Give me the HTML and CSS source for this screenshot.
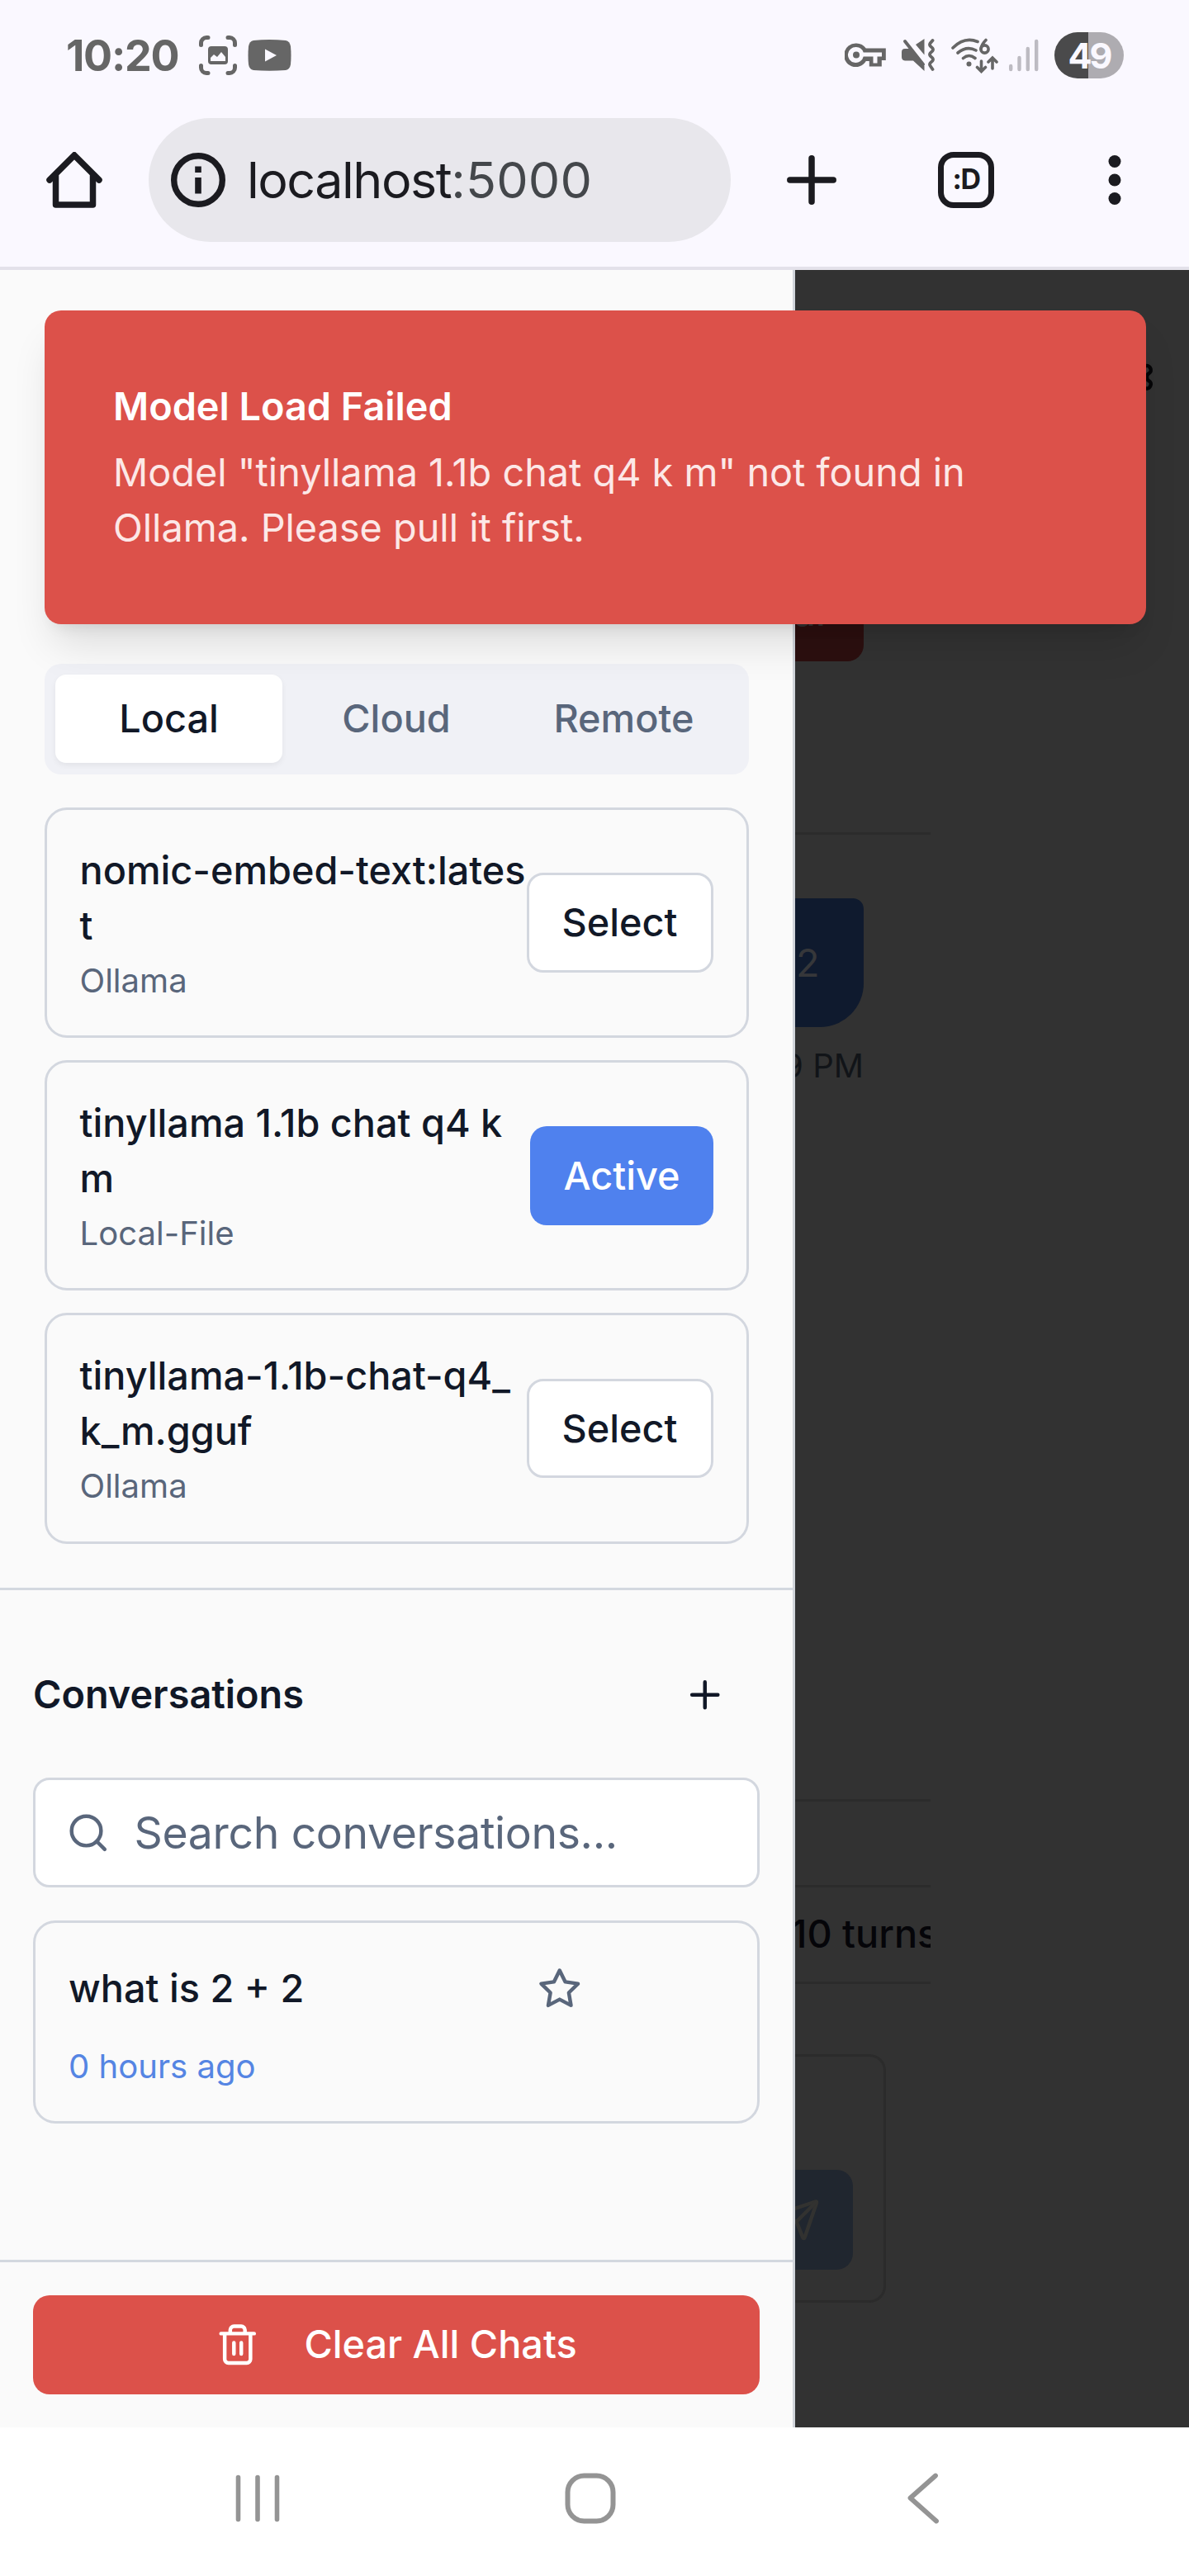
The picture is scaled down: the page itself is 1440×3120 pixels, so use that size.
FILE: index.html
```html
<!DOCTYPE html>
<html lang="en">
<head>
<meta charset="utf-8">
<title>localhost:5000</title>
<link rel="stylesheet" href="styles.css">
</head>
<body>
<div class="phone">
  <header class="browser">
    <div class="status">
      <div class="status-left">
        <span class="clock">10:20</span>
        <svg class="ic-shot" width="46" height="48" viewBox="0 0 46 48" fill="none" stroke="#666" stroke-width="5" stroke-linecap="round">
          <path d="M2.500 11.500V9a6.500 6.500 0 0 1 6.500-6.500h2M35 2.500h2a6.500 6.500 0 0 1 6.500 6.500v2.500M43.500 36.500V39a6.500 6.500 0 0 1-6.500 6.500h-2M11 45.500H9A6.500 6.500 0 0 1 2.500 39v-2.500"/>
          <rect x="11" y="13" width="24" height="22" rx="4" fill="#666" stroke="none"/>
          <path d="M14 31v-4l4-4 4 3 5-6 5 6v5z" fill="#faf8ff" stroke="none"/>
        </svg>
        <svg class="ic-video" width="53" height="38" viewBox="0 0 53 38"><path d="M7 1Q26 -1 46 1Q51 2 52 8Q53 19 52 30Q51 36 46 37Q26 38.500 7 37Q2 36 1 30Q0 19 1 8Q2 2 7 1z" fill="#666"/><path d="M21 11.500v15L35 19z" fill="#faf8ff"/></svg>
      </div>
      <div class="status-right">
        <svg width="50" height="30" viewBox="0 0 50 30"><path d="M14 0.500a14.300 14.300 0 1 0 11.800 21.500h4v6.500h15v-7.500h5V6.500H25.800A14.300 14.300 0 0 0 14 .5zM14 5a9.500 9.500 0 0 1 8.700 6.500H45v5h-5.500v8h-5v-8H22.700A9.500 9.500 0 1 1 14 5z" fill="#666" fill-rule="evenodd"/><circle cx="14" cy="14.500" r="4" fill="#666"/></svg>
        <svg class="ic-mute" width="40" height="40" viewBox="0 0 40 40" fill="none"><path d="M4 12h6L27.500 33v6L14 26.500H4Q0 26 0 22v-6Q0 12 4 12zM17 7L27.500 0v19.500z" fill="#666"/><path d="M6 0.500L30 27.500" stroke="#faf8ff" stroke-width="3"/><path d="M4 3L26 31" stroke="#666" stroke-width="4" stroke-linecap="round"/><path d="M37.500 2l-3 3.500q-1 1.500 0 3l3 3q1 1.500 0 3l-3 3q-1 1.500 0 3l3 3q1 1.500 0 3l-3 3q-1 1.500 0 3l3 4.500" stroke="#666" stroke-width="3.800" stroke-linecap="round"/></svg>
        <svg class="ic-wifi" width="57" height="43" viewBox="0 0 57 43" fill="none" stroke="#666" stroke-width="3.600" stroke-linecap="round"><path d="M2 12Q16-2 32 4.500M8 18q11-9 22-3M14.500 24.500q7-6 14.500 0"/><circle cx="21.500" cy="31.500" r="3" fill="#666" stroke="none"/><path d="M36.500 40V28m-5 7.500 5 5 5-5M50 37V25m-5 4 5-5 5 5M42 2.500q-5.500 5.500-6 11"/><circle cx="40.500" cy="13.500" r="4.600"/></svg>
        <svg class="ic-signal" width="36" height="40" viewBox="0 0 36 40" stroke="#bdbbc2" stroke-width="4.400" stroke-linecap="round"><path d="M2.200 33v4M12.500 23v14M22.800 12v25M33.200 3v34"/></svg>
        <span class="battery">49</span>
      </div>
    </div>
    <div class="toolbar">
      <svg class="ic-home" width="68" height="68" viewBox="0 0 68 68" fill="none" stroke="#1b1b20" stroke-width="7.500" stroke-linejoin="round" stroke-linecap="round"><path d="M4 34L34 4l30 30" stroke-linejoin="miter"/><path d="M11.500 29v35h45V29"/></svg>
      <div class="url">
        <svg width="66" height="66" viewBox="0 0 66 66"><circle cx="33" cy="33" r="29.300" fill="none" stroke="#1b1b20" stroke-width="7.400"/><path d="M29.200 16.500h7.600V24h-7.600zM29.200 30h7.600v19.500h-7.600z" fill="#1b1b20"/></svg>
        <span class="host">localhost</span><span class="port">:5000</span>
      </div>
      <svg class="ic-newtab" width="60" height="60" viewBox="0 0 60 60" stroke="#1b1b20" stroke-width="7.500" stroke-linecap="round"><path d="M30 3.800v52.400M3.800 30h52.400"/></svg>
      <span class="tabs-count">:D</span>
      <svg class="ic-more" width="16" height="60" viewBox="0 0 16 60" fill="#1b1b20"><circle cx="8" cy="7.500" r="7.500"/><circle cx="8" cy="30" r="7.500"/><circle cx="8" cy="52.500" r="7.500"/></svg>
    </div>
  </header>

  <div class="page">
    <aside class="sidebar">
      <section class="models">
        <div class="tabs">
          <span class="tab tab-on">Local</span>
          <span class="tab">Cloud</span>
          <span class="tab">Remote</span>
        </div>
        <div class="model-list">
          <div class="model">
            <div class="model-info"><div class="model-name">nomic-embed-text:latest</div><div class="model-src">Ollama</div></div>
            <span class="btn">Select</span>
          </div>
          <div class="model">
            <div class="model-info"><div class="model-name">tinyllama 1.1b chat q4 k m</div><div class="model-src">Local-File</div></div>
            <span class="btn btn-active">Active</span>
          </div>
          <div class="model">
            <div class="model-info"><div class="model-name">tinyllama-1.1b-chat-q4_k_m.gguf</div><div class="model-src">Ollama</div></div>
            <span class="btn">Select</span>
          </div>
        </div>
      </section>
      <section class="convs">
        <div class="convs-head">
          <h2>Conversations</h2>
          <span class="add"><svg class="lucide" viewBox="0 0 24 24"><path d="M5 12h14M12 5v14"/></svg></span>
        </div>
        <div class="search">
          <svg class="lucide" viewBox="0 0 24 24"><circle cx="11" cy="11" r="8"/><path d="m21 21-4.300-4.300"/></svg>
          <span>Search conversations...</span>
        </div>
        <div class="conv">
          <div class="conv-row">
            <span class="conv-title">what is 2 + 2</span>
            <svg class="lucide" viewBox="0 0 24 24"><path d="M12 2l3.090 6.260L22 9.270l-5 4.870 1.180 6.880L12 17.770l-6.180 3.250L7 14.140 2 9.270l6.910-1.010z"/></svg>
          </div>
          <div class="conv-time">0 hours ago</div>
        </div>
      </section>
      <footer class="side-foot">
        <span class="clear">
          <svg class="lucide" viewBox="0 0 24 24"><path d="M3 6h18M19 6v14c0 1-1 2-2 2H7c-1 0-2-1-2-2V6M8 6V4c0-1 1-2 2-2h4c1 0 2 1 2 2v2M10 11v6M14 11v6"/></svg>
          Clear All Chats
        </span>
      </footer>
    </aside>

    <main class="dimmed">
      <div class="app-head">
        <svg class="lucide gear" viewBox="0 0 24 24"><path d="M12.220 2h-.44a2 2 0 0 0-2 2v.18a2 2 0 0 1-1 1.730l-.43.25a2 2 0 0 1-2 0l-.15-.08a2 2 0 0 0-2.730.73l-.22.38a2 2 0 0 0 .73 2.730l.15.1a2 2 0 0 1 1 1.720v.51a2 2 0 0 1-1 1.740l-.15.09a2 2 0 0 0-.73 2.730l.22.38a2 2 0 0 0 2.730.73l.15-.08a2 2 0 0 1 2 0l.43.25a2 2 0 0 1 1 1.730V20a2 2 0 0 0 2 2h.44a2 2 0 0 0 2-2v-.18a2 2 0 0 1 1-1.730l.43-.25a2 2 0 0 1 2 0l.15.08a2 2 0 0 0 2.730-.73l.22-.39a2 2 0 0 0-.73-2.730l-.15-.08a2 2 0 0 1-1-1.740v-.5a2 2 0 0 1 1-1.740l.15-.09a2 2 0 0 0 .73-2.730l-.22-.38a2 2 0 0 0-2.730-.73l-.15.08a2 2 0 0 1-2 0l-.43-.25a2 2 0 0 1-1-1.730V4a2 2 0 0 0-2-2z"/><circle cx="12" cy="12" r="3"/></svg>
      </div>
      <div class="chat-head"><span class="chat-clear">Clear</span></div>
      <div class="chat">
        <div class="bubble">2</div>
        <div class="stamp"><span>9 PM</span></div>
      </div>
      <div class="context-top"></div>
      <div class="context"><span>10 turns</span></div>
      <div class="composer">
        <span class="send"><svg class="lucide" viewBox="0 0 24 24"><path d="M14.536 21.686a.5.5 0 0 0 .937-.024l6.500-19a.496.496 0 0 0-.635-.635l-19 6.500a.5.5 0 0 0-.024.937l7.930 3.180a2 2 0 0 1 1.112 1.110z"/><path d="m21.854 2.147-10.940 10.939"/></svg></span>
      </div>
    </main>

    <div class="toast">
      <div class="toast-title">Model Load Failed</div>
      <div class="toast-text">Model "tinyllama 1.1b chat q4 k m" not found in Ollama. Please pull it first.</div>
    </div>
  </div>

  <nav class="android-nav">
    <svg class="nav-recents" width="54" height="58" viewBox="0 0 54 58" stroke="#949494" stroke-width="5.600" stroke-linecap="round"><path d="M3.500 3.500v51M27 3.500v51M50.500 3.500v51"/></svg>
    <svg class="nav-home" width="62" height="62" viewBox="0 0 62 62" fill="none" stroke="#949494" stroke-width="6"><rect x="3.500" y="3.500" width="55" height="55" rx="20"/></svg>
    <svg class="nav-back" width="38" height="62" viewBox="0 0 38 62" fill="none" stroke="#949494" stroke-width="5.800" stroke-linecap="round" stroke-linejoin="round"><path d="M34 3.500L3.500 30.500l31.500 28"/></svg>
  </nav>
</div>
</body>
</html>
```

FILE: styles.css
```css
* { box-sizing: border-box; }

body {
  margin: 0;
  font-family: Inter, "Liberation Sans", sans-serif;
  font-size: 46.8px;
  line-height: 67px;
  color: #111827;
  background: #fff;
}

svg { display: block; flex: none; }

.lucide {
  width: 53.5px;
  height: 53.5px;
  fill: none;
  stroke: currentColor;
  stroke-width: 2;
  stroke-linecap: round;
  stroke-linejoin: round;
}

.phone {
  display: flex;
  flex-direction: column;
  width: 1440px;
  height: 3120px;
  overflow: hidden;
}

/* Browser chrome */
.browser {
  height: 327px;
  background: #faf8ff;
  border-bottom: 4px solid #e3e1ea;
}

.status {
  display: flex;
  justify-content: space-between;
  align-items: center;
  height: 134px;
  padding: 0 79px 0 80px;
}

.status-left, .status-right { display: flex; align-items: center; }

.clock {
  width: 160.500px;
  font-size: 52px;
  font-weight: 700;
  letter-spacing: -1.300px;
  color: #666;
}

.ic-video { margin-left: 13px; }
.ic-mute { margin-left: 19px; }
.ic-wifi { margin-left: 20px; }
.ic-signal { margin-left: 13px; }

.battery {
  width: 84px;
  height: 56px;
  margin-left: 19px;
  border-radius: 28px;
  background: linear-gradient(90deg, #4a4a4b 41px, #aeacb1 41px);
  color: #faf8ff;
  font-size: 43px;
  font-weight: 700;
  line-height: 57px;
  letter-spacing: -3px;
  text-align: center;
}

.toolbar {
  display: flex;
  align-items: center;
  height: 168px;
  padding: 0 82px 0 56px;
}

.url {
  display: flex;
  align-items: center;
  width: 705px;
  height: 150px;
  margin: 0 68px 0 56px;
  padding-left: 27px;
  border-radius: 75px;
  background: #e8e7ec;
  font-size: 61px;
}

.host { margin-left: 26px; color: #1b1b20; letter-spacing: -1.500px; }
.port { color: #44474b; letter-spacing: 0.2px; }

.tabs-count {
  width: 68px;
  height: 68px;
  margin: 0 138px 0 123px;
  border: 7.500px solid #1b1b20;
  border-radius: 19px;
  color: #1b1b20;
  font-size: 34px;
  font-weight: 700;
  line-height: 52px;
  letter-spacing: -1.500px;
  text-align: center;
}

/* Web page viewport */
.page {
  position: relative;
  display: flex;
  height: 2613px;
  overflow: hidden;
}

.sidebar {
  display: flex;
  flex-direction: column;
  width: 963px;
  background: #fafafa;
  border-right: 3px solid #d1d5db;
}

.models {
  padding: 477px 53.500px 53.500px;
  border-bottom: 3.300px solid #d3d8df;
}

.tabs {
  display: grid;
  grid-template-columns: repeat(3, 1fr);
  height: 133.700px;
  padding: 13.400px;
  border-radius: 20px;
  background: #f0f1f6;
}

.tab {
  display: flex;
  align-items: center;
  justify-content: center;
  border-radius: 13px;
  color: #59667b;
  font-weight: 500;
}

.tab-on {
  background: #fff;
  color: #111827;
  box-shadow: 0 3px 7px rgba(0, 0, 0, 0.06);
}

.model-list {
  display: flex;
  flex-direction: column;
  gap: 26.700px;
  margin-top: 40.300px;
}

.model {
  display: flex;
  align-items: center;
  height: 279.400px;
  padding: 0 40px;
  border: 3px solid #d3d7df;
  border-radius: 27px;
}

.model-info { flex: 1; min-width: 0; }
.model-name { font-weight: 500; word-break: break-all; }
.model-src {
  margin-top: 6.500px;
  color: #59667b;
  font-size: 40.100px;
  line-height: 53.500px;
}

.btn {
  flex: none;
  height: 120.400px;
  padding: 0 40px;
  border: 3px solid #d3d7df;
  border-radius: 20px;
  background: #fff;
  font-weight: 500;
  line-height: 114px;
}

.btn-active {
  border: 0;
  background: #4f81ee;
  color: #fff;
  line-height: 120px;
}

.convs { flex: 1; padding: 66.500px 40px 0; }

.convs-head {
  display: flex;
  justify-content: space-between;
  align-items: center;
  height: 120px;
}

.convs-head h2 { margin: 0; font-size: 46.800px; font-weight: 600; }
.add { padding: 0 40px; }

.search {
  display: flex;
  align-items: center;
  gap: 29px;
  height: 133.700px;
  margin-top: 40px;
  padding: 0 37px;
  border: 3px solid #d3d7df;
  border-radius: 20px;
  background: #fff;
  color: #59667b;
  font-size: 53.500px;
  letter-spacing: -0.350px;
}

.conv {
  height: 246px;
  margin-top: 40px;
  padding: 44.500px 40px 0;
  border: 3px solid #d3d7df;
  border-radius: 27px;
}

.conv-row {
  display: flex;
  justify-content: space-between;
  align-items: center;
  padding-right: 173px;
  height: 70px;
}

.conv-row .lucide { color: #59667b; }
.conv-title { font-weight: 500; }

.conv-time {
  margin-top: 32.500px;
  color: #5585e3;
  font-size: 40.100px;
  line-height: 53.500px;
}

.side-foot {
  height: 203px;
  padding: 39.500px 40px 0;
  border-top: 3px solid #d3d8df;
}

.clear {
  display: flex;
  align-items: center;
  justify-content: center;
  gap: 53.500px;
  height: 120.500px;
  border-radius: 20px;
  background: #dc514a;
  color: #fff;
  font-weight: 500;
}

/* Chat view under the modal backdrop */
.dimmed {
  flex: 1;
  overflow: hidden;
  background: #323232;
}

.app-head { display: flex; justify-content: flex-end; padding: 103px 40px 0 0; }
.gear { color: #050507; }

.chat-head {
  width: 163.500px;
  height: 527px;
  padding: 197.500px 80.500px 0 0;
  border-bottom: 3px solid #2b2b2b;
}

.chat-clear {
  display: flex;
  justify-content: flex-end;
  height: 120px;
  padding-right: 40px;
  border-radius: 0 20px 20px 0;
  background: #2c0f0f;
  color: #333;
  font-weight: 500;
  line-height: 120px;
}

.chat {
  display: flex;
  flex-direction: column;
  width: 83px;
  height: 1168.500px;
  padding-top: 77.500px;
}

.bubble {
  height: 156px;
  padding-right: 53.500px;
  border-radius: 0 13px 53px 0;
  background: #0f1a2e;
  color: #36373a;
  line-height: 156px;
  text-align: right;
}

.stamp {
  display: flex;
  justify-content: flex-end;
  margin-top: 20px;
  color: #111418;
  font-size: 40.100px;
  white-space: nowrap;
  line-height: 54px;
}

.context-top { width: 163.500px; height: 104px; border-top: 3px solid #2b2b2b; }

.context {
  width: 163.500px;
  height: 120px;
  padding-top: 22.500px;
  overflow: hidden;
  border-top: 3px solid #2b2b2b;
  border-bottom: 3px solid #2b2b2b;
  color: #050509;
  font-weight: 500;
  white-space: nowrap;
}

.context span { margin-left: -5px; }

.composer {
  display: flex;
  align-items: flex-end;
  width: 110px;
  height: 301px;
  margin-top: 85px;
  padding-bottom: 37.500px;
  border: solid #2b2b2b;
  border-width: 3px 3px 3px 0;
  border-radius: 0 20px 20px 0;
}

.send {
  display: flex;
  align-items: center;
  justify-content: flex-end;
  width: 70px;
  height: 120.400px;
  padding-right: 40px;
  overflow: hidden;
  border-radius: 0 20px 20px 0;
  background: #20262f;
  color: #323230;
}

/* Notification laid over sidebar and backdrop */
.toast {
  position: absolute;
  left: 53.500px;
  top: 49px;
  width: 1334px;
  height: 380px;
  padding: 82.500px 180px 0 83.500px;
  border-radius: 20px;
  background: #dc514a;
  color: #fff;
  box-shadow: 0 33px 50px -10px rgba(0, 0, 0, 0.12), 0 13px 20px -13px rgba(0, 0, 0, 0.12);
}

.toast-title { font-weight: 600; }
.toast-text { margin-top: 13px; color: #fce8e7; }

/* System navigation */
.android-nav {
  display: flex;
  align-items: center;
  height: 180px;
  padding: 0 0 8px 285px;
  background: #fff;
}

.nav-home { margin-left: 345px; }
.nav-back { margin-left: 353px; }
```
